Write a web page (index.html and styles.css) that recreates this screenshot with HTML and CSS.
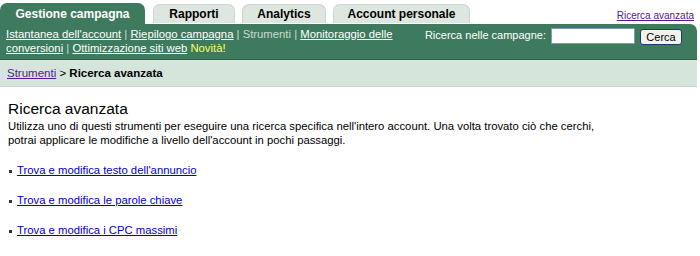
FILE: index.html
```html
<!DOCTYPE html>
<html lang="it">
<head>
    <meta charset="UTF-8">
    <title>Ricerca avanzata</title>
    <link rel="stylesheet" href="styles.css">
</head>
<body>
    <div class="page">
        <div class="tabs">
            <div class="tab active">Gestione campagna</div>
            <div class="tab tab-rapporti">Rapporti</div>
            <div class="tab tab-analytics">Analytics</div>
            <div class="tab tab-account">Account personale</div>
            <a class="top-link" href="#">Ricerca avanzata</a>
        </div>
        <div class="navbar">
            <div class="subnav">
                <a href="#">Istantanea dell'account</a> | <a href="#">Riepilogo campagna</a> | <span class="current">Strumenti</span> | <a href="#">Monitoraggio delle conversioni</a> | <a href="#">Ottimizzazione siti web</a> <span class="new">Novità!</span>
            </div>
            <div class="search">
                <label>Ricerca nelle campagne:</label>
                <input type="text" class="search-input">
                <button class="search-btn">Cerca</button>
            </div>
        </div>
        <div class="crumbs">
            <a href="#">Strumenti</a> &gt; <b>Ricerca avanzata</b>
        </div>
        <div class="content">
            <h1>Ricerca avanzata</h1>
            <p>Utilizza uno di questi strumenti per eseguire una ricerca specifica nell'intero account. Una volta trovato ciò che cerchi,<br>potrai applicare le modifiche a livello dell'account in pochi passaggi.</p>
            <ul class="tools">
                <li><a href="#">Trova e modifica testo dell'annuncio</a></li>
                <li><a href="#">Trova e modifica le parole chiave</a></li>
                <li><a href="#">Trova e modifica i CPC massimi</a></li>
            </ul>
        </div>
    </div>
</body>
</html>
```

FILE: styles.css
```css
body {
    margin: 0;
    font-family: "Liberation Sans", Arial, sans-serif;
    font-size: 11.3px;
    color: #000;
    background: #fff;
}
.page {
    width: 697px;
}
.tabs {
    display: flex;
    align-items: flex-end;
    height: 24px;
}
.tab {
    font-size: 12px;
    font-weight: bold;
    text-align: center;
    border-radius: 7px 7px 0 0;
    margin-right: 7px;
}
.tab.active {
    width: 145px;
    height: 21px;
    line-height: 23px;
    background: #3e7b5e;
    color: #fff;
    margin-right: 8px;
}
.tab:not(.active) {
    height: 18px;
    line-height: 19px;
    background: #dde6df;
    border: 1px solid #cbd6cd;
    border-bottom: none;
    margin-bottom: 1px;
}
.tab-rapporti {
    width: 80px;
}
.tab-analytics {
    width: 82px;
}
.tab-account {
    width: 135px;
}
.top-link {
    margin-left: auto;
    align-self: center;
    margin-top: 6px;
    margin-right: 3px;
    font-size: 10px;
    color: #551a8b;
}
.navbar {
    display: flex;
    justify-content: space-between;
    background: #3e7b5e;
    border-radius: 0 7px 0 0;
    height: 36px;
    padding: 3px 6px 0 6px;
    box-sizing: border-box;
    border-bottom: 1px solid #2c5c45;
}
.subnav {
    width: 400px;
    color: #d0dcd4;
    line-height: 14px;
}
.subnav a {
    color: #fff;
}
.subnav .current {
    color: #ccd8d0;
}
.subnav .new {
    color: #ffff66;
}
.search {
    display: flex;
    align-items: flex-start;
    color: #fff;
    margin-top: 1px;
    margin-right: 9px;
}
.search label {
    margin-right: 5px;
    line-height: 15px;
    font-size: 11px;
}
.search-input {
    width: 84px;
    height: 16px;
    box-sizing: border-box;
    border: 1px solid #7f9db9;
    margin: 0 5px 0 0;
    padding: 0;
}
.search-btn {
    height: 16px;
    width: 42px;
    margin-top: 1px;
    font-family: "Liberation Sans", Arial, sans-serif;
    font-size: 11px;
    padding: 0;
    background: #f3f3ee;
    border: 1px solid #1c3c64;
    border-radius: 3px;
}
.crumbs {
    background: #d6e5dc;
    height: 26px;
    line-height: 26px;
    padding-left: 7px;
    font-size: 11.5px;
    border-bottom: 1px solid #bfd3c6;
}
.crumbs a {
    color: #551a8b;
}
.content {
    padding: 13px 8px;
}
.content h1 {
    font-size: 15.5px;
    font-weight: normal;
    margin: 0 0 1px 0;
    line-height: 18px;
}
.content p {
    margin: 0;
    line-height: 14px;
}
.tools {
    list-style: none;
    padding: 0;
    margin: 16px 0 0 0;
}
.tools li {
    height: 30px;
    line-height: 14px;
    padding-left: 1px;
}
.tools li::before {
    content: "";
    display: inline-block;
    width: 3px;
    height: 3px;
    background: #333;
    vertical-align: middle;
    margin-right: 5px;
}
.tools a {
    color: #0000cc;
}
```
